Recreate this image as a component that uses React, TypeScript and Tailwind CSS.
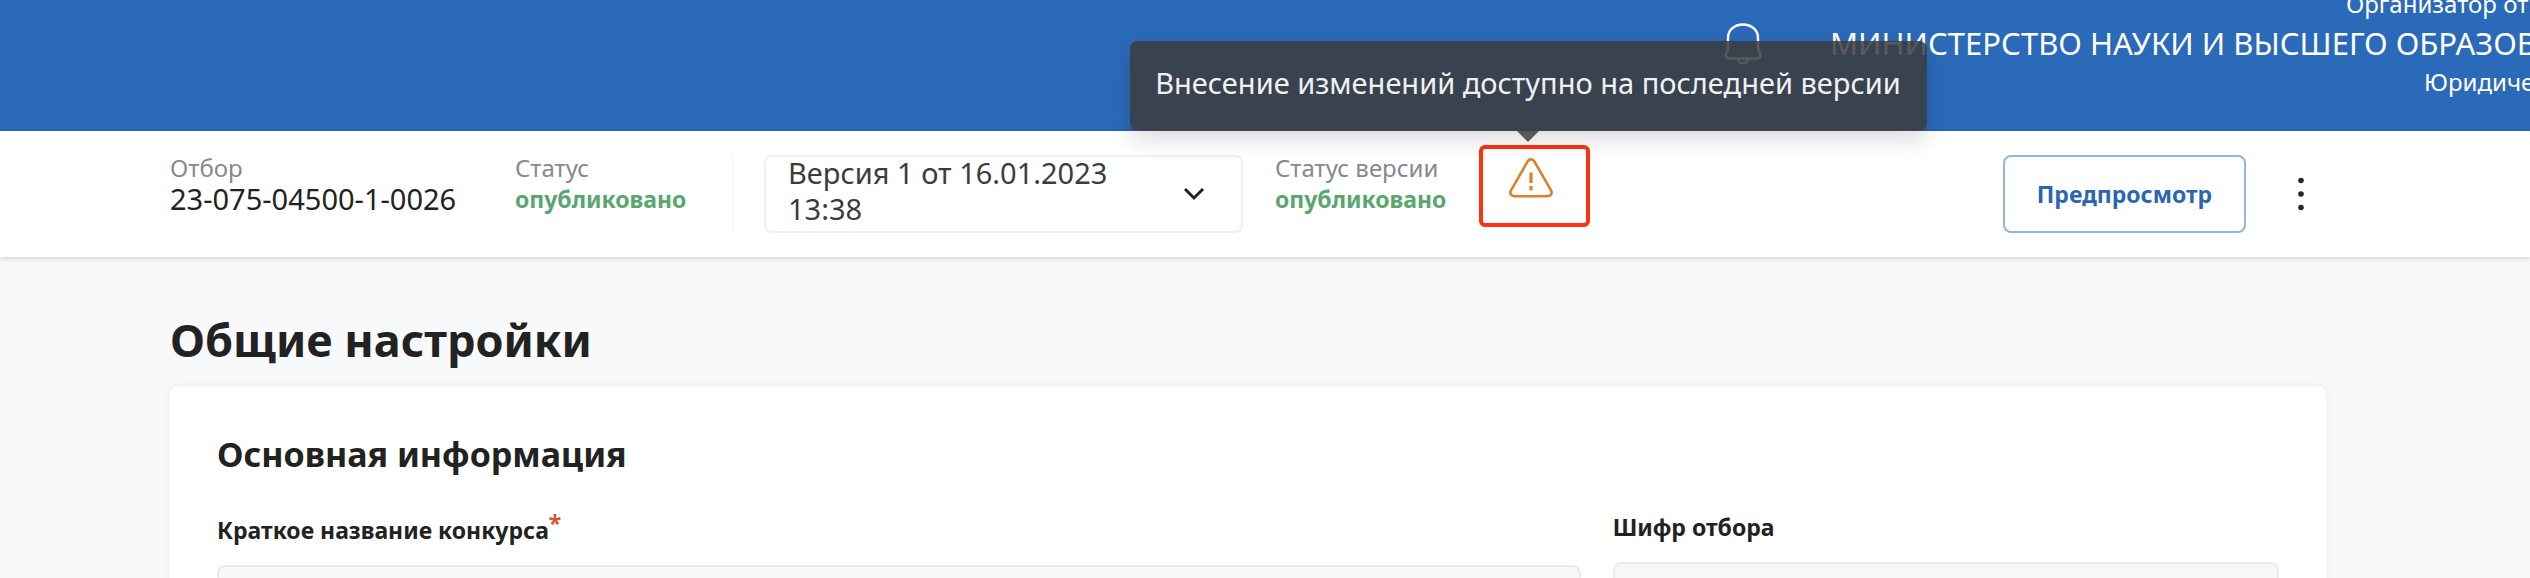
import { ReactNode, useState } from "react";

function Field({ label, children }: { label: string; children: ReactNode }) {
  return (
    <div className="flex shrink-0 flex-col whitespace-nowrap">
      <span className="text-2xl leading-[26px] text-[#86898f]">{label}</span>
      {children}
    </div>
  );
}

function BellIcon() {
  return (
    <svg viewBox="0 0 38 42" className="h-[42px] w-[38px]" fill="none" stroke="white" strokeWidth="2.4" strokeLinejoin="round" aria-hidden="true">
      <path d="M19 1.500C10 1.500 4 7.500 4 15v8c0 3-.6 4.500-1.600 6.500-1.600 3.300-.8 6 2.600 6h28c3.400 0 4.200-2.700 2.600-6-1-2-1.600-3.500-1.600-6.500v-8C34 7.500 28 1.500 19 1.500Z" />
      <path d="M14 36c.7 2.700 2.500 4.300 5 4.300s4.300-1.600 5-4.300" />
    </svg>
  );
}

function WarningIcon() {
  return (
    <svg viewBox="0 0 44 40" className="h-10 w-11" fill="none" stroke="#d9822b" strokeWidth="2.600" strokeLinecap="butt" strokeLinejoin="round" aria-hidden="true">
      <path d="M18.800 3.200 2 32.400c-1.500 2.900 0 5.800 3.400 5.800h33.200c3.400 0 4.900-2.900 3.400-5.800L25.200 3.200c-1.600-2.400-4.800-2.400-6.400 0Z" />
      <path d="M22 14.500v10.500M22 28v4.500" strokeWidth="3.200" />
    </svg>
  );
}

export default function App() {
  const [name, setName] = useState("");
  const [code, setCode] = useState("");

  return (
    <div className="flex h-screen flex-col overflow-hidden bg-[#f8f9fb] font-['Noto_Sans','Open_Sans',sans-serif] text-[#222]">
      <header className="flex h-[131px] shrink-0 justify-end overflow-hidden bg-[#2b6ab8] text-white">
        <button type="button" aria-label="Уведомления" className="mt-[23px] mr-[68px] h-[42px] shrink-0">
          <BellIcon />
        </button>
        <div className="flex w-[700px] shrink-0 flex-col overflow-hidden whitespace-nowrap">
          <span className="-mt-3 pl-[516px] text-2xl leading-8">Организатор от</span>
          <span className="text-[31px] leading-[46px]">МИНИСТЕРСТВО НАУКИ И ВЫСШЕГО ОБРАЗОВ</span>
          <span className="pl-[594px] text-2xl leading-8">Юридиче</span>
        </div>
      </header>

      <section className="relative flex h-[126px] shrink-0 items-start bg-white pt-6 pr-[204px] pl-[170px] shadow-[0_1px_6px_rgba(0,0,0,0.2)]">
        <div className="w-[345px] shrink-0">
          <Field label="Отбор">
            <span className="text-[29px] leading-9">23-075-04500-1-0026</span>
          </Field>
        </div>
        <div className="h-[78px] w-[219px] shrink-0 border-r-2 border-[#f7f7f9]">
          <Field label="Статус">
            <span className="text-[23px] leading-9 font-bold text-[#5aa66f]">опубликовано</span>
          </Field>
        </div>
        <div className="relative ml-[30px] flex h-[78px] w-[479px] shrink-0 items-center justify-between rounded-lg border-2 border-[#eff0f4] pr-9 pl-[22px]">
          <span aria-hidden="true" className="w-[350px] pb-[6px] text-[29px] leading-9 text-[#3c3c3c]">
            Версия 1 от 16.01.2023 13:38
          </span>
          <svg viewBox="0 0 22 14" className="h-[14px] w-[22px]" fill="none" stroke="#222" strokeWidth="3" aria-hidden="true">
            <path d="m2 2 9 9 9-9" />
          </svg>
          <select aria-label="Версия" className="absolute inset-0 cursor-pointer opacity-0">
            <option>Версия 1 от 16.01.2023 13:38</option>
          </select>
        </div>
        <div className="ml-8 w-[204px] shrink-0">
          <Field label="Статус версии">
            <span className="text-[23px] leading-9 font-bold text-[#5aa66f]">опубликовано</span>
          </Field>
        </div>
        <div className="relative -mt-[10px] shrink-0">
          <button type="button" aria-label="Предупреждение" aria-describedby="version-hint" className="flex h-[82px] w-[111px] justify-center rounded-md border-4 border-[#fb3310] pt-[9px] pr-2">
            <WarningIcon />
          </button>
          <div id="version-hint" role="tooltip" className="absolute bottom-[96px] left-1/2 flex h-[90px] w-[797px] -translate-x-[405px] items-center justify-center rounded-lg bg-[rgba(60,60,60,0.85)] pb-[6px] text-[29px] whitespace-nowrap text-[#f1f1f1] shadow-[0_8px_24px_rgba(0,0,0,0.15)]">
            Внесение изменений доступно на последней версии
            <svg viewBox="0 0 22 11" className="absolute top-full left-1/2 h-[11px] w-[22px] -translate-x-1/2" aria-hidden="true">
              <path d="M0 0h22L11 11Z" fill="#595959" />
            </svg>
          </div>
        </div>
        <div className="ml-auto flex shrink-0 items-center gap-[30px]">
          <button type="button" className="h-[78px] w-[243px] rounded-lg border-2 border-[#94b5dc] text-[23px] font-bold text-[#2b66b1]">
            Предпросмотр
          </button>
          <button type="button" aria-label="Ещё" className="flex h-[78px] w-[50px] items-center justify-center">
            <svg viewBox="0 0 6 34" className="h-[34px] w-[6px]" fill="#1c2b38" aria-hidden="true">
              <circle cx="3" cy="3.500" r="2.800" />
              <circle cx="3" cy="17" r="2.800" />
              <circle cx="3" cy="30.500" r="2.800" />
            </svg>
          </button>
        </div>
      </section>

      <main className="flex min-h-0 flex-1 flex-col overflow-hidden pt-[53px] pr-[204px] pl-[170px]">
        <h1 className="text-[45px] leading-[60px] font-bold">Общие настройки</h1>
        <form className="mt-4 flex-1 rounded-t-lg bg-white px-[47px] pt-[45px] shadow-[0_0_8px_rgba(0,0,0,0.06)]">
          <h2 className="text-[34px] leading-[46px] font-bold">Основная информация</h2>
          <div className="mt-7 grid grid-cols-[1363fr_666fr] gap-8">
            <div>
              <label htmlFor="contest-name" className="flex h-[60px] text-[23px] leading-[50px] font-bold">
                Краткое название конкурса
                <span className="text-[#d9532c] leading-[36px]">*</span>
              </label>
              <input id="contest-name" value={name} onChange={(e) => setName(e.target.value)} className="block h-[70px] w-full rounded-lg border-2 border-[#e9ebee] bg-[#f7f7f8] px-5" />
            </div>
            <div>
              <label htmlFor="contest-code" className="flex h-[57px] text-[23px] leading-[44px] font-bold">
                Шифр отбора
              </label>
              <input id="contest-code" value={code} onChange={(e) => setCode(e.target.value)} className="block h-[70px] w-full rounded-lg border-2 border-[#e9ebee] bg-[#f7f7f8] px-5" />
            </div>
          </div>
        </form>
      </main>
    </div>
  );
}
